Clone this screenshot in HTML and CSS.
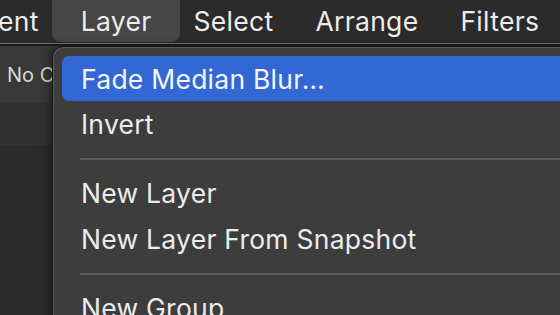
FILE: index.html
```html
<!DOCTYPE html>
<html>
<head>
<meta charset="utf-8">
<link rel="stylesheet" href="styles.css">
</head>
<body>
<div class="screen">
  <nav class="menubar">
    <span class="mi first">ent</span>
    <span class="mi active">Layer</span>
    <span class="mi">Select</span>
    <span class="mi">Arrange</span>
    <span class="mi">Filters</span>
  </nav>
  <div class="workspace">
    <div class="toolbar"><span class="tb-label">No Color</span></div>
    <div class="band"></div>
    <div class="canvas"></div>
  </div>
  <div class="menu">
    <div class="item selected">Fade Median Blur…</div>
    <div class="item">Invert</div>
    <div class="sep"></div>
    <div class="item">New Layer</div>
    <div class="item">New Layer From Snapshot</div>
    <div class="sep"></div>
    <div class="item">New Group</div>
  </div>
</div>
</body>
</html>
```

FILE: styles.css
```css
html, body {
  margin: 0;
  padding: 0;
  background: #2c2c2c;
}
.screen {
  position: relative;
  width: 560px;
  height: 315px;
  overflow: hidden;
  font-family: Inter, "Noto Sans", sans-serif;
  color: #ececec;
}
.menubar {
  display: flex;
  align-items: flex-end;
  height: 43px;
  gap: 42px;
  background: #2b2b2b;
  border-bottom: 1px solid #6d7480;
  box-sizing: content-box;
  font-size: 26.5px;
  white-space: nowrap;
}
.mi {
  height: 42px;
  display: flex;
  align-items: center;
  margin-bottom: 1px;
  letter-spacing: 0.3px;
}
.mi.first {
  margin-left: -2px;
}
.mi.active {
  background: #464646;
  border-radius: 0 0 9px 9px;
  padding: 0 29px 0 29px;
  margin-left: -29px;
  margin-right: -29px;
}
.workspace {
  border-top: 2px solid #1c1c1c;
}
.toolbar {
  height: 57px;
  background: #393939;
  display: flex;
  align-items: center;
  padding-left: 7px;
  font-size: 20px;
  color: #d9d9d9;
}
.tb-label {
  width: 45px;
  overflow: hidden;
  white-space: nowrap;
}
.band {
  height: 42px;
  background: #323232;
}
.canvas {
  height: 200px;
  background: #2c2c2c;
}
.menu {
  position: absolute;
  left: 52px;
  top: 46px;
  width: 560px;
  height: 300px;
  background: #3d3d3d;
  border: 1px solid #161616;
  border-radius: 11px 0 0 0;
  box-shadow: inset 1px 1px 0 #5a5a5a, -4px 0 10px rgba(0, 0, 0, 0.35);
  padding: 9px 0 0 9px;
  box-sizing: border-box;
  font-size: 26.5px;
}
.item {
  height: 46px;
  display: flex;
  align-items: center;
  padding-left: 19px;
  white-space: nowrap;
  letter-spacing: 0.25px;
}
.item.selected {
  height: 45px;
  background: #3367d3;
  border-radius: 7px 0 0 7px;
  color: #f4f6fb;
}
.sep {
  height: 2px;
  background: #5b5b5b;
  margin: 11px 0 10px 18px;
}
```
